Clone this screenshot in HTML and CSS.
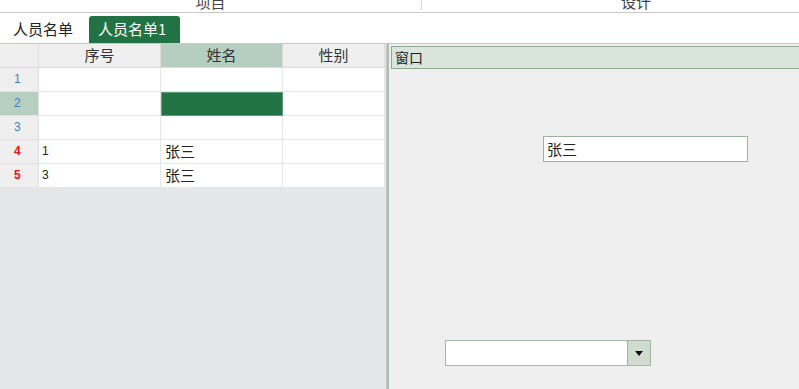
FILE: index.html
```html
<!DOCTYPE html>
<html lang="zh-CN">
<head>
  <meta charset="UTF-8">
  <title>人员名单</title>
  <link rel="stylesheet" href="styles.css">
</head>
<body>
  <!-- Top section titles -->
  <div class="top-strip">
    <div class="top-cell left"><span>项目</span></div>
    <div class="top-cell right"><span>设计</span></div>
  </div>

  <!-- Sheet tabs -->
  <div class="tabs">
    <div class="tab">人员名单</div>
    <div class="tab active">人员名单1</div>
  </div>

  <div class="main">
    <!-- Grid -->
    <div class="grid-area">
      <div class="grid">
        <div class="row head">
          <div class="rh"></div>
          <div class="cell">序号</div>
          <div class="cell sel">姓名</div>
          <div class="cell last">性别</div>
        </div>
        <div class="row">
          <div class="rh blue">1</div>
          <div class="cell"></div>
          <div class="cell"></div>
          <div class="cell last"></div>
        </div>
        <div class="row">
          <div class="rh blue sel">2</div>
          <div class="cell"></div>
          <div class="cell active"></div>
          <div class="cell last"></div>
        </div>
        <div class="row">
          <div class="rh blue">3</div>
          <div class="cell"></div>
          <div class="cell"></div>
          <div class="cell last"></div>
        </div>
        <div class="row">
          <div class="rh red">4</div>
          <div class="cell num">1</div>
          <div class="cell">张三</div>
          <div class="cell last"></div>
        </div>
        <div class="row">
          <div class="rh red">5</div>
          <div class="cell num">3</div>
          <div class="cell">张三</div>
          <div class="cell last"></div>
        </div>
      </div>
    </div>

    <!-- Designer window -->
    <div class="designer">
      <div class="win-title">窗口</div>
      <div class="canvas">
        <div class="textbox">张三</div>
        <div class="combo">
          <div class="combo-field"></div>
          <div class="combo-btn">
            <svg width="8" height="5" viewBox="0 0 8 5"><path d="M0 0h8L4 5z" fill="#111"/></svg>
          </div>
        </div>
      </div>
    </div>
  </div>
</body>
</html>
```

FILE: styles.css
```css
* {
  margin: 0;
  padding: 0;
  box-sizing: border-box;
}

body {
  width: 799px;
  height: 389px;
  overflow: hidden;
  background-color: #fff;
  color: #333;
  font-family: "Noto Sans CJK SC", sans-serif;
  font-size: 15px;
}

/* top strip */
.top-strip {
  display: flex;
  height: 13px;
  border-bottom: 1px solid #c9c9c9;
  overflow: hidden;
}

.top-cell {
  flex: none;
  display: flex;
  justify-content: center;
  line-height: 14px;
}

.top-cell span {
  margin-top: -5px;
  color: #444;
}

.top-cell.left {
  width: 422px;
  border-right: 1px solid #d6d6d6;
  height: 10px;
}

.top-cell.right {
  width: 428px;
}

/* tabs */
.tabs {
  display: flex;
  align-items: flex-end;
  height: 31px;
  padding-left: 3px;
  gap: 6px;
  border-bottom: 1px solid #c8c8c8;
}

.tab {
  height: 27px;
  padding: 0 10px;
  line-height: 25px;
  color: #222;
}

.tab.active {
  width: 91px;
  padding: 0 9px;
  background-color: #217346;
  color: #fff;
  border-radius: 3px 3px 0 0;
}

/* main area */
.main {
  display: flex;
  height: 345px;
}

.grid-area {
  width: 387px;
  background-color: #e5e6e7;
  border-right: 1px solid #c7c7c7;
}

.grid {
  width: 385px;
}

.row {
  display: flex;
  height: 24px;
}

.rh {
  width: 39px;
  flex: none;
  background-color: #efefef;
  border-right: 1px solid #dedede;
  border-bottom: 1px solid #e2e2e2;
  font-family: "Liberation Sans", sans-serif;
  font-size: 12px;
  line-height: 23px;
  padding-left: 14px;
}

.rh.blue {
  color: #3f7fbf;
}

.rh.red {
  color: #f01010;
  font-weight: bold;
}

.rh.sel {
  background-color: #b6cfbe;
}

.cell {
  width: 122px;
  flex: none;
  background-color: #fff;
  border-right: 1px solid #e6e6e6;
  border-bottom: 1px solid #e6e6e6;
  line-height: 22px;
  padding-left: 4px;
  color: #222;
}

.cell.last {
  width: 102px;
}

.cell.num {
  font-family: "Liberation Sans", sans-serif;
  font-size: 12px;
  line-height: 23px;
  padding-left: 3px;
}

.cell.active {
  background-color: #217346;
  border: 1px solid #5f9c7a;
}

.row.head .rh,
.row.head .cell {
  background-color: #efefef;
  border-bottom: 1px solid #dadada;
  border-right: 1px solid #dcdcdc;
  text-align: center;
  padding-left: 0;
  color: #333;
}

.row.head .cell.sel {
  background-color: #b5cebf;
}

/* designer window */
.designer {
  flex: 1;
  display: flex;
  flex-direction: column;
  background-color: #efefef;
  border-left: 2px solid #abc0af;
  padding-left: 2px;
  padding-top: 2px;
}

.win-title {
  height: 23px;
  background-color: #d9e4db;
  border: 1px solid #8ea692;
  border-right: none;
  line-height: 20px;
  padding-left: 3px;
  font-size: 14px;
  color: #222;
}

.canvas {
  position: relative;
  flex: 1;
}

.textbox {
  position: absolute;
  left: 152px;
  top: 67px;
  width: 205px;
  height: 26px;
  background-color: #fff;
  border: 1px solid #9db39f;
  padding-left: 3px;
  line-height: 23px;
  color: #222;
}

.combo {
  position: absolute;
  left: 54px;
  top: 271px;
  width: 206px;
  height: 26px;
  display: flex;
  border: 1px solid #a4b6a6;
}

.combo-field {
  flex: 1;
  background-color: #fff;
}

.combo-btn {
  width: 23px;
  display: flex;
  align-items: center;
  justify-content: center;
  background-color: #cfdccf;
  border-left: 1px solid #9fb2a1;
}
```
